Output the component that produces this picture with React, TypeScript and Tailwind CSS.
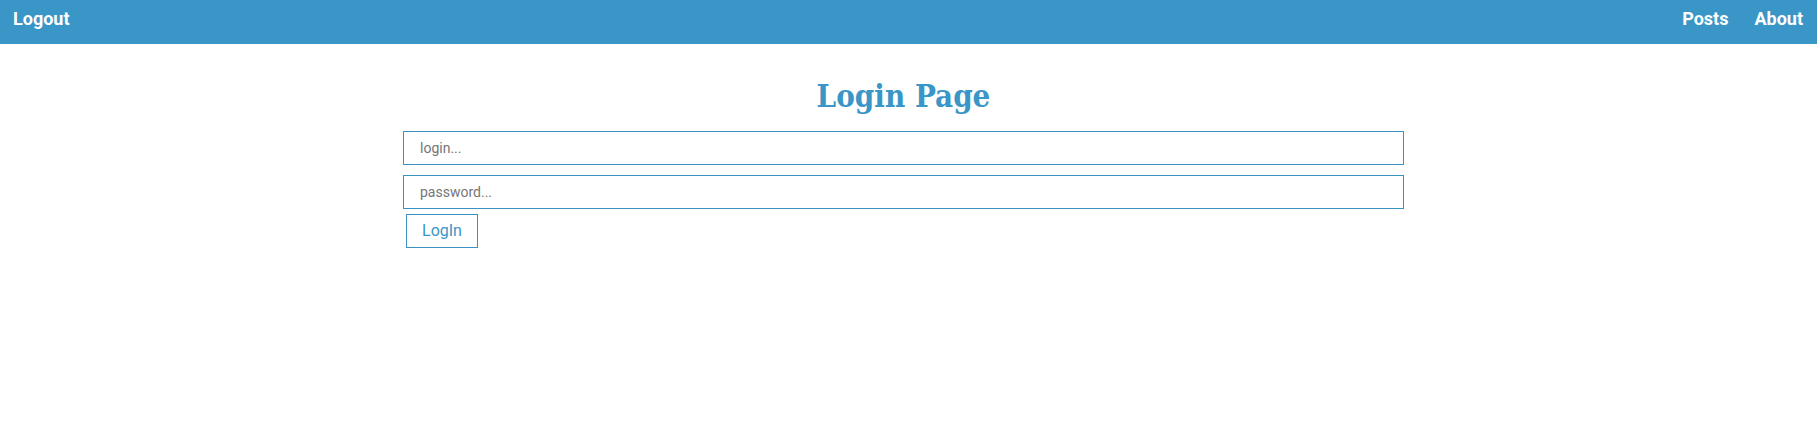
import React from "react";

export default function App() {
  return (
    <div className="min-h-[439px] bg-white" style={{ fontFamily: "Roboto, 'Liberation Sans', sans-serif" }}>
      <nav className="h-[44px] bg-[#3a96c6] flex items-start justify-between pt-[10px] pl-[13px] pr-[14px] text-white font-bold text-[18px]">
        <a className="leading-none">Logout</a>
        <div className="flex gap-[26px]">
          <a className="leading-none">Posts</a>
          <a className="leading-none">About</a>
        </div>
      </nav>
      <div className="flex justify-center pr-[10px]">
        <div className="w-[1001px]">
          <h1
            className="text-center text-[#3a96c6] font-bold text-[31px] leading-none mt-[37px] mb-[19px]"
            style={{ fontFamily: "'DejaVu Serif Condensed', 'DejaVu Serif', serif" }}
          >
            Login Page
          </h1>
          <input
            className="block w-full h-[34px] border border-[#3a92c2] px-[16px] text-[14px] text-gray-700 placeholder:text-[#757575] outline-none"
            placeholder="login..."
          />
          <input
            className="block w-full h-[34px] border border-[#3a92c2] px-[16px] text-[14px] text-gray-700 placeholder:text-[#757575] outline-none mt-[10px]"
            placeholder="password..."
          />
          <button className="mt-[5px] ml-[3px] w-[72px] h-[34px] border border-[#3a92c2] text-[#3a96c6] text-[16px] bg-white">
            LogIn
          </button>
        </div>
      </div>
    </div>
  );
}
